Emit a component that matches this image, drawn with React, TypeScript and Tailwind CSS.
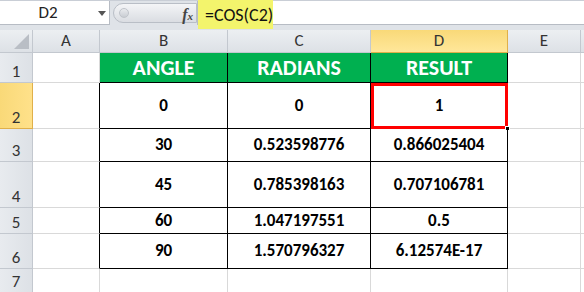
import React from "react";

const font = { fontFamily: "Carlito, Calibri, Lato, 'Liberation Sans', sans-serif" };

const colWidths = [33, 67, 128, 143, 137, 73];
const rowHeights = [30, 46, 33, 46, 26, 35, 24];

const rows = [
  ["0", "0", "1"],
  ["30", "0.523598776", "0.866025404"],
  ["45", "0.785398163", "0.707106781"],
  ["60", "1.047197551", "0.5"],
  ["90", "1.570796327", "6.12574E-17"],
];

function FormulaBar() {
  return (
    <div className="flex h-[29px] bg-[#dfe3e8] border-t border-[#c9ced6]" style={font}>
      <div className="flex items-center w-[110px] h-[24px] bg-white border-b border-r border-[#b7bcc4] relative">
        <span className="w-[96px] text-center text-[17px] text-[#222] leading-none">D2</span>
        <span className="absolute right-[3px] top-[10px] w-0 h-0 border-l-[4px] border-r-[4px] border-t-[5px] border-l-transparent border-r-transparent border-t-[#555]" />
      </div>
      <div className="flex items-center w-[87px] h-[24px] pl-[3px]">
        <div className="relative flex items-center h-[20px] w-full rounded-l-full bg-gradient-to-b from-[#f4f5f7] to-[#dadde2] border border-[#b9bec6]">
          <span className="absolute left-[5px] top-[4px] w-[10px] h-[10px] rounded-full bg-gradient-to-b from-[#e9ebee] to-[#c9cdd3] border border-[#c0c4ca]" />
          <span className="absolute right-[3px] top-[-1px] text-[16px] italic font-bold text-[#444]" style={{ fontFamily: "'Liberation Serif', serif" }}>
            f<span className="text-[11px]">x</span>
          </span>
        </div>
      </div>
      <div className="flex-1 h-[24px] bg-white border-b border-l border-[#b7bcc4] relative">
        <div className="absolute left-0 top-[-1px] w-[75px] h-[29px] bg-[#f3f46c] flex items-center pl-[7px]">
          <span className="text-[18px] text-[#111] leading-none">=COS(C2)</span>
        </div>
      </div>
    </div>
  );
}

function ColHeader({ label, active, w }: { label: string; active?: boolean; w: number }) {
  return (
    <div
      className={
        "flex items-center justify-center h-[23px] border-r border-b text-[17px] " +
        (active
          ? "bg-gradient-to-b from-[#f9d978] to-[#ffe79a] border-[#e0b04a] text-[#333]"
          : "bg-gradient-to-b from-[#eceff2] to-[#dde1e6] border-[#c3c8cf] text-[#333]")
      }
      style={{ width: w }}
    >
      {label}
    </div>
  );
}

export default function App() {
  const gridCols = colWidths.map((w) => `${w}px`).join(" ") + " 1fr";
  return (
    <div className="w-[584px] h-[292px] overflow-hidden bg-white" style={font}>
      <FormulaBar />
      <div className="h-[1px] bg-[#dfe3e8]" />
      <div className="flex">
        <div className="relative w-[33px] h-[23px] bg-gradient-to-b from-[#eceff2] to-[#dde1e6] border-r border-b border-[#c3c8cf]">
          {/* select-all corner triangle */}
          <svg className="absolute right-[3px] bottom-[3px]" width="15" height="15" viewBox="0 0 15 15">
            <polygon points="15,0 15,15 0,15" fill="#b9bec5" />
          </svg>
        </div>
        <ColHeader label="A" w={colWidths[1]} />
        <ColHeader label="B" w={colWidths[2]} />
        <ColHeader label="C" w={colWidths[3]} />
        <ColHeader label="D" w={colWidths[4]} active />
        <ColHeader label="E" w={colWidths[5]} />
        <div className="flex-1 h-[23px] bg-gradient-to-b from-[#eceff2] to-[#dde1e6] border-b border-[#c3c8cf]" />
      </div>
      <div className="grid" style={{ gridTemplateColumns: gridCols, gridTemplateRows: rowHeights.map((h) => `${h}px`).join(" ") }}>
        {rowHeights.map((_, r) => {
          const rowNo = r + 1;
          const inTable = rowNo >= 2 && rowNo <= 6;
          const cells: React.ReactNode[] = [];
          cells.push(
            <div
              key={`h${r}`}
              className={
                "flex items-end justify-center text-[17px] leading-[20px] text-[#333] border-r border-b " +
                (rowNo === 2
                  ? "bg-gradient-to-r from-[#f9d978] to-[#ffe18a] border-[#e0b04a]"
                  : "bg-gradient-to-r from-[#e8ebef] to-[#dde1e6] border-[#c3c8cf]")
              }
            >
              {rowNo}
            </div>
          );
          cells.push(
            <div key={`a${r}`} className={"border-b border-[#d9d9d9] border-r " + (inTable ? "border-r-black" : "border-r-[#d9d9d9]")} />
          );
          if (rowNo === 1) {
            ["ANGLE", "RADIANS", "RESULT"].map((t, i) =>
              cells.push(
                <div key={`g${i}`} className="flex items-center justify-center bg-[#00b050] text-white font-bold text-[22px] border-r border-r-black border-b border-b-black">
                  {t}
                </div>
              )
            );
          } else if (inTable) {
            rows[rowNo - 2].map((t, i) =>
              cells.push(
                <div key={`d${i}`} className="relative flex items-center justify-center text-[17px] font-bold text-black border-r border-b border-black">
                  {t}
                  {rowNo === 2 && i === 2 && (
                    <span className="absolute left-0 top-0 right-[-1px] bottom-[-1px] border-[3px] border-[#ff0000]">
                      <span className="absolute right-[-5px] bottom-[-5px] w-[5px] h-[5px] bg-black border border-white" />
                    </span>
                  )}
                </div>
              )
            );
          } else {
            [0, 1, 2].map((i) => cells.push(<div key={`e${i}`} className="border-r border-b border-[#d9d9d9]" />));
          }
          cells.push(<div key={`x${r}`} className="border-r border-b border-[#d9d9d9]" />);
          cells.push(<div key={`y${r}`} className="border-b border-[#d9d9d9]" />);
          return cells;
        })}
      </div>
    </div>
  );
}
